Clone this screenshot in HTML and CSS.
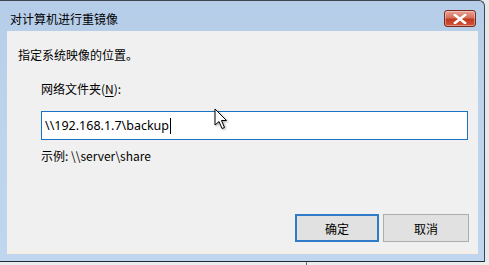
FILE: index.html
```html
<!DOCTYPE html>
<html>
<head>
<meta charset="utf-8">
<link rel="stylesheet" href="styles.css">
</head>
<body>
<div class="window">
  <div class="titlebar">
    <span class="title">对计算机进行重镜像</span>
    <div class="close">
      <svg width="14" height="10" viewBox="0 0 14 10"><path d="M2 1 L12 9 M12 1 L2 9" stroke="#fff" stroke-width="2.6" stroke-linecap="square"/></svg>
    </div>
  </div>
  <div class="client">
    <p class="intro">指定系统映像的位置。</p>
    <div class="form">
      <label class="label">网络文件夹(<u>N</u>):</label>
      <div class="input"><span class="value">\\192.168.1.7\backup</span><span class="caret"></span></div>
      <p class="hint">示例: \\server\share</p>
    </div>
    <div class="buttons">
      <button class="btn default">确定</button>
      <button class="btn">取消</button>
    </div>
  </div>
</div>
<div class="below"><span class="below-line"></span></div>
<svg class="cursor" width="14" height="22" viewBox="0 0 14 22"><path d="M1 1 L1 17 L5 13.5 L8 20.5 L10.5 19.5 L7.5 12.5 L12.5 12.5 Z" fill="#fff" stroke="#000" stroke-width="1" stroke-linejoin="miter"/></svg>
</body>
</html>
```
FILE: styles.css
```css
html, body {
  margin: 0;
  padding: 0;
}
body {
  width: 489px;
  height: 265px;
  overflow: hidden;
  background: #e8e8e8;
  font-family: "Noto Sans CJK SC", "Noto Sans", sans-serif;
  font-size: 12px;
  color: #000;
  position: relative;
}
.window {
  width: 471px;
  height: 260px;
  padding: 0 6px 0 7px;
  border-top: 1px solid #3e4750;
  border-right: 1px solid #3e4750;
  border-bottom: 1px solid #1f2a35;
  border-top-right-radius: 6px;
  background: linear-gradient(#b5cde8, #bcd3ec 40%, #c0d6ee);
  display: flex;
  flex-direction: column;
  box-sizing: content-box;
}
.titlebar {
  height: 30px;
  display: flex;
  align-items: center;
  justify-content: space-between;
  margin-left: -4px;
}
.title {
  font-size: 12px;
  color: #000;
  line-height: 16px;
  padding-left: 7px;
  padding-top: 5px;
}
.close {
  width: 30px;
  height: 15px;
  margin-right: 2px;
  margin-top: 5px;
  border: 1px solid #7a2a1f;
  border-radius: 3px;
  background: linear-gradient(#e8a493, #d4705c 45%, #c0391f 55%, #d2553d);
  display: flex;
  align-items: center;
  justify-content: center;
  box-shadow: inset 0 0 0 1px rgba(255,255,255,0.35);
}
.client {
  flex: 1;
  background: #f0f0f0;
  display: flex;
  flex-direction: column;
  margin-bottom: 7px;
  box-shadow: inset 0 -4px 0 -1px #f6efe8;
}
.intro {
  margin: 16px 0 0 11px;
  line-height: 16px;
}
.form {
  margin: 18px 0 0 34px;
  display: flex;
  flex-direction: column;
}
.label {
  line-height: 16px;
}
.label u {
  text-decoration-thickness: 1px;
  text-underline-offset: 2px;
}
.input {
  margin-top: 14px;
  width: 422px;
  height: 27px;
  border: 1px solid #1a73c2;
  background: #fff;
  display: flex;
  align-items: center;
  padding-left: 3px;
  box-sizing: content-box;
}
.value {
  font-family: "Noto Sans", "Noto Sans CJK SC", sans-serif;
  font-size: 12.5px;
  line-height: 16px;
  color: #000;
}
.caret {
  width: 1px;
  height: 16px;
  background: #000;
  margin-left: 1px;
}
.hint {
  margin: 8px 0 0 0;
  line-height: 16px;
}
.buttons {
  margin-top: auto;
  margin-bottom: 12px;
  display: flex;
  justify-content: flex-end;
  gap: 4px;
  padding-right: 9px;
}
.btn {
  width: 86px;
  height: 28px;
  margin: 0;
  background: #e1e1e1;
  border: 1px solid #adadad;
  font-family: "Noto Sans CJK SC", "Noto Sans", sans-serif;
  font-size: 12px;
  color: #000;
  padding: 0;
}
.btn.default {
  width: 84px;
  border: 2px solid #2f7bc7;
}
.below {
  height: 4px;
  background: #ececec;
  position: relative;
}
.below-line {
  position: absolute;
  left: 306px;
  top: 0;
  width: 1px;
  height: 4px;
  background: #6b6b6b;
}
.cursor {
  position: absolute;
  left: 214px;
  top: 108px;
  filter: drop-shadow(1px 1px 1px rgba(0,0,0,0.35));
}
```
